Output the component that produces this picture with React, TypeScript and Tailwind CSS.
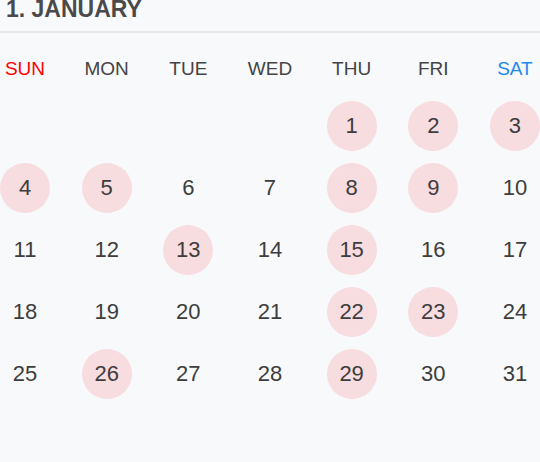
import React from "react";

const weekdays = [
  { label: "SUN", color: "text-[#ff0000]" },
  { label: "MON", color: "text-[#444444]" },
  { label: "TUE", color: "text-[#444444]" },
  { label: "WED", color: "text-[#444444]" },
  { label: "THU", color: "text-[#444444]" },
  { label: "FRI", color: "text-[#444444]" },
  { label: "SAT", color: "text-[#1e88f0]" },
];

const marked = new Set([1, 2, 3, 4, 5, 8, 9, 13, 15, 22, 23, 26, 29]);

// January starts on a Thursday
const firstDay = 4;
const daysInMonth = 31;

function buildWeeks() {
  const cells: (number | null)[] = [];
  for (let i = 0; i < firstDay; i++) cells.push(null);
  for (let d = 1; d <= daysInMonth; d++) cells.push(d);
  while (cells.length % 7 !== 0) cells.push(null);
  const weeks: (number | null)[][] = [];
  for (let i = 0; i < cells.length; i += 7) weeks.push(cells.slice(i, i + 7));
  return weeks;
}

export default function App() {
  const weeks = buildWeeks();

  return (
    <div
      className="w-[540px] h-[462px] bg-[#f8f9fb] overflow-hidden"
      style={{ fontFamily: '"Liberation Sans", Arial, sans-serif' }}
    >
      {/* Month title */}
      <div className="h-[34px] px-[6px] border-b-2 border-[#e6e8eb]">
        <h1 className="-mt-[1px] text-[23px] leading-[20px] font-bold text-[#4a4a4a]">
          1. JANUARY
        </h1>
      </div>

      <div className="pt-[10px]">
        {/* Weekday header */}
        <div className="flex justify-between h-[50px]">
          {weekdays.map((w) => (
            <div
              key={w.label}
              className={`w-[50px] flex items-center justify-center text-[19px] leading-[19px] ${w.color}`}
            >
              {w.label}
            </div>
          ))}
        </div>

        {/* Days */}
        <div className="mt-[8px] flex flex-col gap-[12px]">
          {weeks.map((week, wi) => (
            <div key={wi} className="flex justify-between h-[50px]">
              {week.map((day, di) => (
                <div
                  key={di}
                  className={`w-[50px] h-[50px] rounded-full flex items-center justify-center text-[22px] leading-[22px] text-[#3d3d3d] ${
                    day !== null && marked.has(day) ? "bg-[#f7dce0]" : ""
                  }`}
                >
                  {day ?? ""}
                </div>
              ))}
            </div>
          ))}
        </div>
      </div>
    </div>
  );
}
